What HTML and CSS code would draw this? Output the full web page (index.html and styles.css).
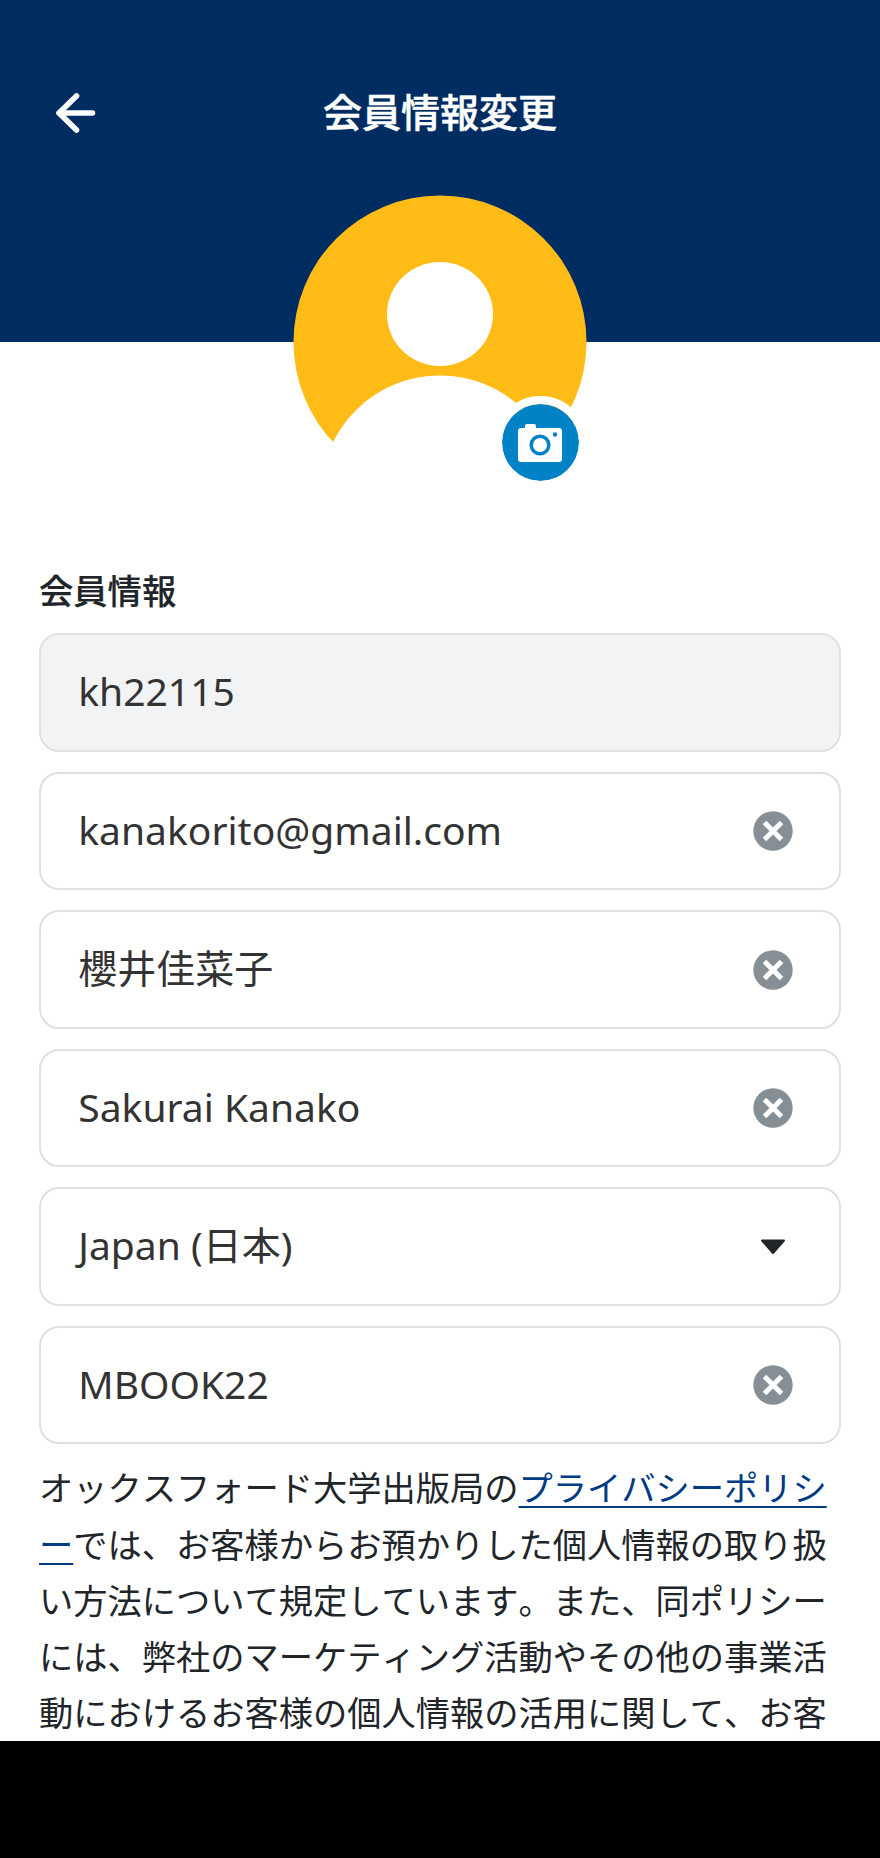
FILE: index.html
```html
<!DOCTYPE html>
<html lang="ja">
<head>
    <meta charset="UTF-8">
    <meta name="viewport" content="width=device-width, initial-scale=1.0">
    <title>会員情報変更</title>
    <link rel="stylesheet" href="styles.css">
</head>
<body>

    <div class="screen">
        <header class="header">
            <svg class="back" viewBox="0 0 40 40">
                <path d="M20.5 3 L3 20 L20.5 37 M3 20 H36.5" />
            </svg>
            <h1>会員情報変更</h1>
        </header>

        <div class="avatar">
            <svg viewBox="0 0 294 294">
                <circle cx="147" cy="147" r="146.5" fill="#ffbc17" />
                <ellipse cx="147" cy="119" rx="53" ry="52" fill="#fff" />
                <circle cx="147" cy="299.8" r="119.3" fill="#fff" />
            </svg>
            <div class="camera">
                <svg viewBox="0 0 44 40">
                    <path d="M3 5 H7 V3 Q7 1 9 1 H16 Q18 1 18 3 V5 H41 Q44 5 44 8 V36 Q44 39 41 39 H3 Q0 39 0 36 V8 Q0 5 3 5 Z" fill="#fff" />
                    <circle cx="22" cy="22" r="8.8" fill="#fff" stroke="#0083c6" stroke-width="3.5" />
                    <circle cx="37" cy="11.5" r="2.2" fill="#0083c6" />
                </svg>
            </div>
        </div>

        <main class="content">
            <h2>会員情報</h2>
            <div class="field disabled">
                <span>kh22115</span>
            </div>
            <div class="field">
                <span>kanakorito@gmail.com</span>
                <svg class="clear" viewBox="0 0 40 40"><circle cx="20" cy="20" r="19.7" /><path d="M11.5 11.5 L28.5 28.5 M28.5 11.5 L11.5 28.5" /></svg>
            </div>
            <div class="field">
                <span>櫻井佳菜子</span>
                <svg class="clear" viewBox="0 0 40 40"><circle cx="20" cy="20" r="19.7" /><path d="M11.5 11.5 L28.5 28.5 M28.5 11.5 L11.5 28.5" /></svg>
            </div>
            <div class="field">
                <span>Sakurai Kanako</span>
                <svg class="clear" viewBox="0 0 40 40"><circle cx="20" cy="20" r="19.7" /><path d="M11.5 11.5 L28.5 28.5 M28.5 11.5 L11.5 28.5" /></svg>
            </div>
            <div class="field">
                <span>Japan (日本)</span>
                <svg class="arrow" viewBox="0 0 40 40"><path d="M9 13.5 H31 L20 26 Z" /></svg>
            </div>
            <div class="field">
                <span>MBOOK22</span>
                <svg class="clear" viewBox="0 0 40 40"><circle cx="20" cy="20" r="19.7" /><path d="M11.5 11.5 L28.5 28.5 M28.5 11.5 L11.5 28.5" /></svg>
            </div>
            <p class="policy">オックスフォード大学出版局の<a href="#">プライバシーポリシー</a>では、お客様からお預かりした個人情報の取り扱い方法について規定しています。また、同ポリシーには、弊社のマーケティング活動やその他の事業活動におけるお客様の個人情報の活用に関して、お客</p>
        </main>

        <div class="navbar"></div>
    </div>

</body>
</html>
```
FILE: styles.css
```css
body {
    margin: 0;
    background: #fff;
    font-family: "Noto Sans", "Noto Sans CJK JP", sans-serif;
    color: #212529;
}
.screen {
    display: flex;
    flex-direction: column;
    height: 1858px;
    overflow: hidden;
}
.header {
    display: grid;
    grid-template-columns: 40px 1fr 40px;
    align-items: center;
    flex: none;
    box-sizing: border-box;
    height: 342px;
    padding: 76px 56px 198px;
    background: #002d61;
}
.back {
    width: 40px;
    height: 40px;
    margin-top: 5px;
    fill: none;
    stroke: #fff;
    stroke-width: 5.6;
    stroke-linecap: round;
    stroke-linejoin: round;
}
h1 {
    margin: 0;
    color: #fff;
    font-family: "Noto Sans CJK JP", sans-serif;
    font-size: 39px;
    font-weight: 500;
    line-height: 56px;
    text-align: center;
    -webkit-text-stroke: 0.5px #fff;
}
/* overlaps the lower edge of the header */
.avatar {
    position: relative;
    flex: none;
    width: 294px;
    height: 294px;
    margin: -147px auto 0;
}
.avatar > svg {
    display: block;
}
.camera {
    position: absolute;
    right: 0.5px;
    bottom: 0;
    display: flex;
    align-items: center;
    justify-content: center;
    width: 77px;
    height: 77px;
    border: 8px solid #fff;
    border-radius: 50%;
    background: #0083c6;
    background-clip: padding-box;
}
.camera svg {
    width: 44px;
    height: 40px;
}
.content {
    flex: 1;
    min-height: 0;
    overflow: hidden;
    padding: 72px 39px 0;
}
h2 {
    margin: 0 0 16.3px;
    font-family: "Noto Sans CJK JP", sans-serif;
    font-size: 34.3px;
    font-weight: 500;
    line-height: 56px;
    -webkit-text-stroke: 0.2px #212529;
}
.field {
    display: flex;
    align-items: center;
    justify-content: space-between;
    box-sizing: border-box;
    height: 118.5px;
    margin-bottom: 20px;
    padding: 0 46.5px 0 37.3px;
    border: 2px solid #dfe0e2;
    border-radius: 20px;
    font-size: 39px;
    line-height: 56px;
    color: #333;
}
.field span {
    padding-bottom: 3px;
}
.disabled {
    background: #f1f3f5;
}
.clear,
.arrow {
    width: 40px;
    height: 40px;
}
.clear circle {
    fill: #868e96;
}
.clear path {
    stroke: #fff;
    stroke-width: 5;
}
.arrow path {
    fill: #212529;
    stroke: #212529;
    stroke-width: 2;
    stroke-linejoin: round;
}
.policy {
    margin: -6px 0 0;
    font-family: "Noto Sans CJK JP", sans-serif;
    font-size: 34.25px;
    font-kerning: none;
    line-height: 56.2px;
    line-break: anywhere;
}
.policy a {
    color: #003b83;
    text-decoration: underline;
    text-decoration-thickness: 2px;
    text-underline-offset: 5px;
}
.navbar {
    flex: none;
    height: 117px;
    background: #000;
}
```
